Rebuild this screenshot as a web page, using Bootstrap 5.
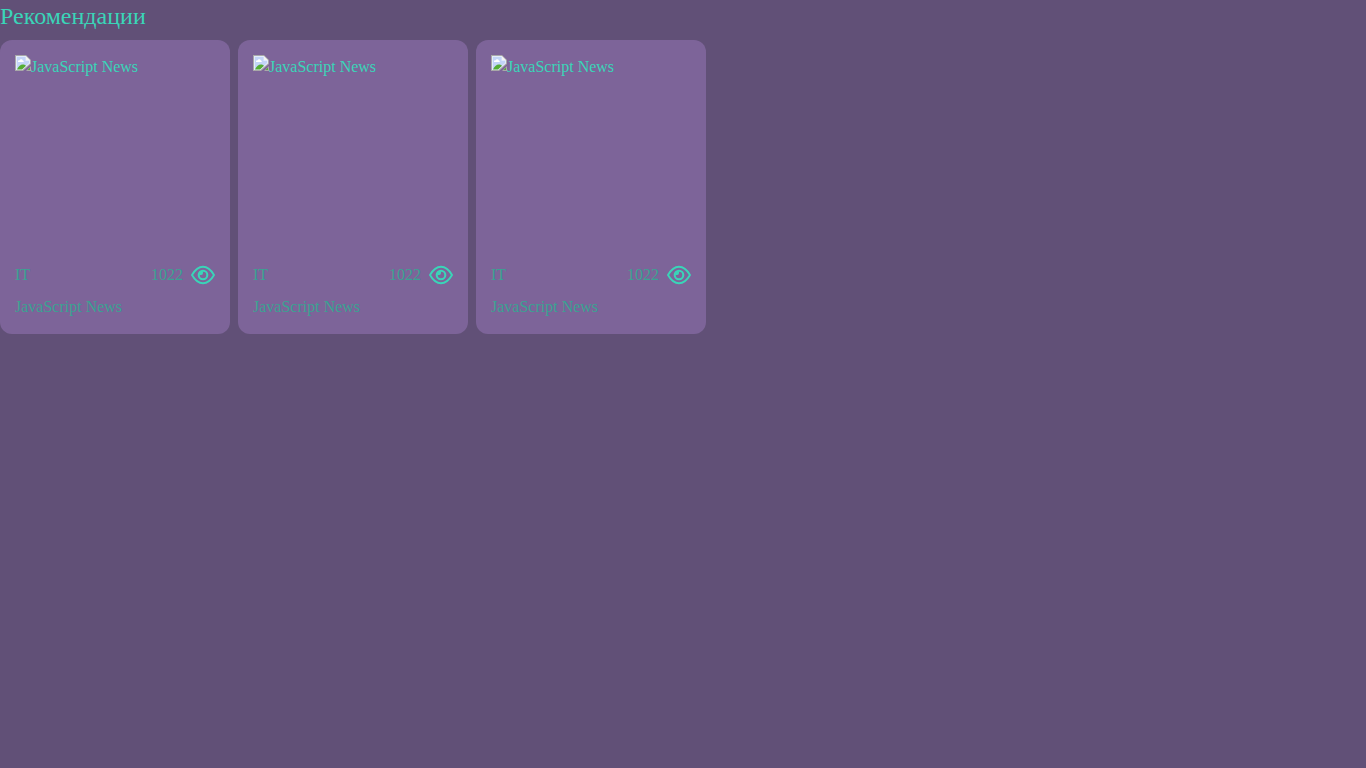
<!DOCTYPE html>
<html lang="ru">
<head>
<meta charset="utf-8">
<meta name="viewport" content="width=device-width, initial-scale=1">
<title>Рекомендации</title>
<link href="https://cdn.jsdelivr.net/npm/bootstrap@5.3.0/dist/css/bootstrap.min.css" rel="stylesheet">
<style>
  body {
    background: #615077;
    color: #3ad5b8;
    font-family: "Liberation Serif", serif;
    font-size: 16px;
    line-height: 24px;
  }
  .section-title { font-size: 24px; line-height: 32px; }
  .article-card {
    --bs-card-bg: #7d6499;
    --bs-card-border-width: 0;
    --bs-card-border-radius: 12px;
    width: 230px;
    padding: 15px;
    color: #3aa292;
  }
  .article-cover { height: 200px; color: #3ad5b8; }
  .eye-icon { color: #3ad5b8; }
</style>
</head>
<body>
<svg class="d-none" aria-hidden="true">
  <symbol id="cover" viewBox="0 0 16 16">
    <path d="M0 0h11l5 5v4L8 16H0z" fill="#a8a8a8"/>
    <path d="M1 1h10v4h4v3.500L7.500 15H1z" fill="#e3ebfb"/>
    <path d="M2 2h8.500v4H14v2L7 14H2z" fill="#c3d4f8"/>
    <path d="M3 7c-.2-1.200.7-1.800 1.500-1.600C5 3.800 7.500 3.800 7.800 5.400c1.100 0 1.300 1.200.6 1.600z" fill="#fff"/>
    <path d="M2 14.500c1.500-3.500 3.700-5 5.700-5 1.300 0 2.400.4 3.300 1.300L7 14.500z" fill="#54ad34"/>
    <path d="M11 1v4h4z" fill="#f4f4f4"/>
    <path d="M16 11v5h-5z" fill="#a8a8a8"/>
    <path d="M15 12.500V15h-2.500z" fill="#54ad34"/>
  </symbol>
  <symbol id="eye" viewBox="0 0 24 20">
    <path d="M1 10C4.200 4.400 7.600 1.700 12 1.700S19.800 4.400 23 10c-3.200 5.600-6.600 8.300-11 8.300S4.200 15.600 1 10z" fill="none" stroke="currentColor" stroke-width="1.900" stroke-linejoin="round"/>
    <circle cx="12" cy="10" r="4.300" fill="none" stroke="currentColor" stroke-width="2.100"/>
    <path d="M12 6.200v2A1.900 1.900 0 0 1 10.200 10H8.200A3.800 3.800 0 0 1 12 6.200z" fill="currentColor"/>
  </symbol>
</svg>

<main>
  <h1 class="section-title fw-normal mb-2">Рекомендации</h1>
  <div class="d-flex flex-wrap gap-2">
    <article class="card article-card">
      <div class="article-cover d-flex align-items-start"><svg width="16" height="16" aria-hidden="true"><use href="#cover"/></svg><span>JavaScript News</span></div>
      <div class="d-flex align-items-center gap-2 mt-2"><span class="me-auto">IT</span><span>1022</span><svg class="eye-icon" width="24" height="20" role="img" aria-label="Просмотры"><use href="#eye"/></svg></div>
      <div class="mt-2">JavaScript News</div>
    </article>
    <article class="card article-card">
      <div class="article-cover d-flex align-items-start"><svg width="16" height="16" aria-hidden="true"><use href="#cover"/></svg><span>JavaScript News</span></div>
      <div class="d-flex align-items-center gap-2 mt-2"><span class="me-auto">IT</span><span>1022</span><svg class="eye-icon" width="24" height="20" role="img" aria-label="Просмотры"><use href="#eye"/></svg></div>
      <div class="mt-2">JavaScript News</div>
    </article>
    <article class="card article-card">
      <div class="article-cover d-flex align-items-start"><svg width="16" height="16" aria-hidden="true"><use href="#cover"/></svg><span>JavaScript News</span></div>
      <div class="d-flex align-items-center gap-2 mt-2"><span class="me-auto">IT</span><span>1022</span><svg class="eye-icon" width="24" height="20" role="img" aria-label="Просмотры"><use href="#eye"/></svg></div>
      <div class="mt-2">JavaScript News</div>
    </article>
  </div>
</main>
<script src="https://cdn.jsdelivr.net/npm/bootstrap@5.3.0/dist/js/bootstrap.bundle.min.js"></script>
</body>
</html>
